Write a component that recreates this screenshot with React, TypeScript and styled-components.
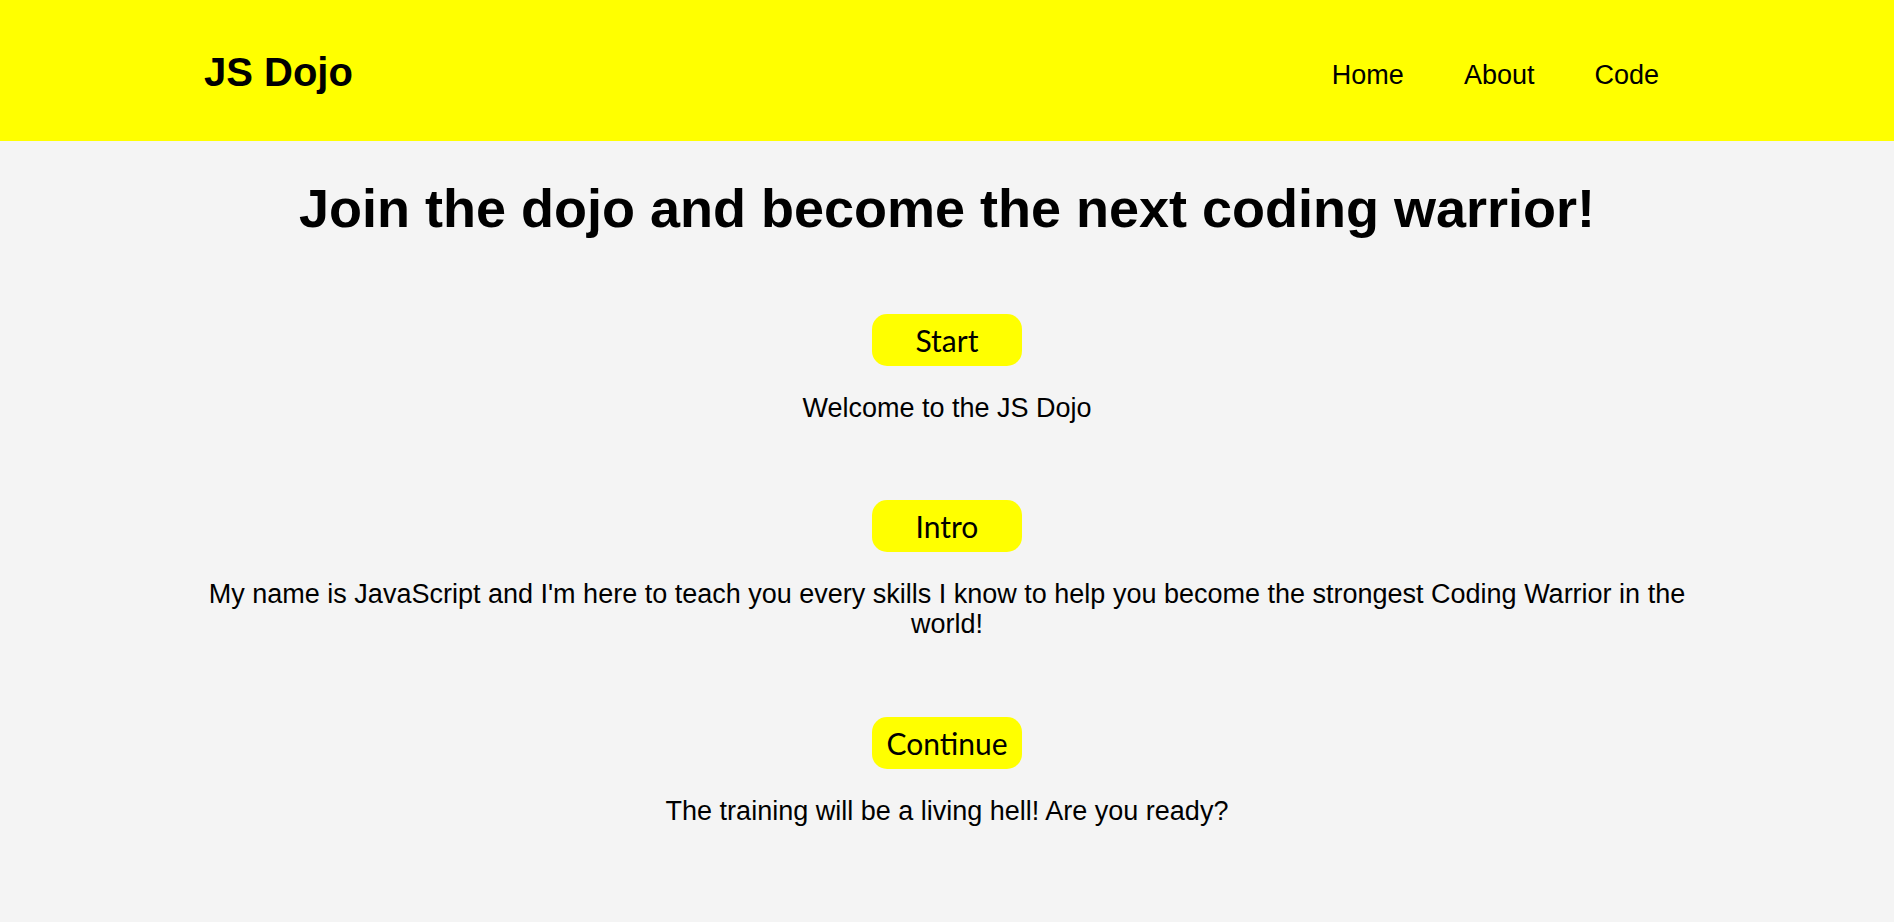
import React from "react";
import styled, { createGlobalStyle } from "styled-components";

const GlobalStyle = createGlobalStyle`
  * { box-sizing: border-box; }
  html, body {
    margin: 0;
    padding: 0;
    background: #f4f4f4;
    font-family: "Liberation Sans", Arial, sans-serif;
    color: #000;
  }
`;

const Header = styled.header`
  height: 141px;
  background: #ffff00;
  display: flex;
  align-items: flex-start;
  justify-content: space-between;
  padding: 49px 205px 0 204px;
`;

const Logo = styled.div`
  font-size: 40px;
  font-weight: 700;
  line-height: 46px;
`;

const Nav = styled.nav`
  display: flex;
  align-items: baseline;
  padding-top: 11px;
`;

const NavLink = styled.a`
  font-size: 27px;
  line-height: 31px;
  color: #000;
  text-decoration: none;
  padding: 0 30px;
  cursor: pointer;
`;

const Main = styled.main`
  display: flex;
  flex-direction: column;
  align-items: center;
  padding: 0 190px 60px;
`;

const Title = styled.h1`
  margin: 36px 0 0;
  font-size: 54px;
  font-weight: 700;
  line-height: 62px;
  text-align: center;
`;

const Section = styled.section<{ $gap: number }>`
  display: flex;
  flex-direction: column;
  align-items: center;
  margin-top: ${(p) => p.$gap}px;
`;

const StepButton = styled.button`
  width: 150px;
  height: 52px;
  border: none;
  border-radius: 15px;
  background: #ffff00;
  color: #000;
  font-family: Lato, "Noto Sans", sans-serif;
  font-size: 30px;
  padding: 0;
  cursor: pointer;
`;

const Text = styled.p`
  margin: 27px 0 0;
  font-size: 27px;
  line-height: 30.5px;
  text-align: center;
`;

const steps = [
  { label: "Start", text: "Welcome to the JS Dojo", gap: 75 },
  {
    label: "Intro",
    text: "My name is JavaScript and I'm here to teach you every skills I know to help you become the strongest Coding Warrior in the world!",
    gap: 76,
  },
  { label: "Continue", text: "The training will be a living hell! Are you ready?", gap: 77 },
];

export default function App() {
  return (
    <>
      <GlobalStyle />
      <Header>
        <Logo>JS Dojo</Logo>
        <Nav>
          <NavLink>Home</NavLink>
          <NavLink>About</NavLink>
          <NavLink>Code</NavLink>
        </Nav>
      </Header>
      <Main>
        <Title>Join the dojo and become the next coding warrior!</Title>
        {steps.map((s) => (
          <Section key={s.label} $gap={s.gap}>
            <StepButton>{s.label}</StepButton>
            <Text>{s.text}</Text>
          </Section>
        ))}
      </Main>
    </>
  );
}
